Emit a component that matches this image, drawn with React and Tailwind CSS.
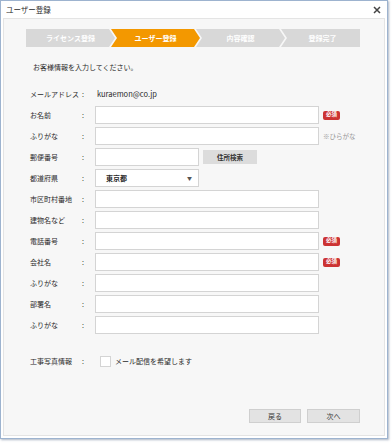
import React from 'react';

const FONT = "font-['Noto_Sans_CJK_JP','Noto_Sans',sans-serif]";

const STEPS = [
  { label: 'ライセンス登録', first: true },
  { label: 'ユーザー登録', active: true },
  { label: '内容確認' },
  { label: '登録完了', last: true },
];

const ROWS = [
  { label: 'お名前', required: true },
  { label: 'ふりがな', note: '※ひらがな' },
  { label: '郵便番号', kind: 'zip' },
  { label: '都道府県', kind: 'select' },
  { label: '市区町村番地' },
  { label: '建物名など' },
  { label: '電話番号', required: true },
  { label: '会社名', required: true },
  { label: 'ふりがな' },
  { label: '部署名' },
  { label: 'ふりがな' },
];

function Steps() {
  return (
    <div className="ml-[22px] mt-[10px] flex h-[18px] w-[334px]">
      {STEPS.map((s) => {
        const shape = s.first
          ? '[clip-path:polygon(0_0,calc(100%_-_6px)_0,100%_50%,calc(100%_-_6px)_100%,0_100%)]'
          : s.last
          ? '[clip-path:polygon(0_0,100%_0,100%_100%,0_100%,6px_50%)]'
          : '[clip-path:polygon(0_0,calc(100%_-_6px)_0,100%_50%,calc(100%_-_6px)_100%,0_100%,6px_50%)]';
        return (
          <div
            key={s.label}
            className={`flex h-full shrink-0 items-center justify-center text-[7px] font-bold text-white ${shape} ${
              s.first ? 'w-[89px]' : s.last ? '-ml-[4px] w-[79px] pl-[4px]' : '-ml-[4px] w-[89px]'
            } ${s.active ? 'bg-[#f39800]' : 'bg-[#d8d8d8]'}`}
          >
            {s.label}
          </div>
        );
      })}
    </div>
  );
}

function Badge() {
  return (
    <span className="ml-[4px] flex h-[9px] w-[17px] items-center justify-center rounded-[2px] bg-[#cc3333] text-[5.5px] font-bold leading-none text-white">
      必須
    </span>
  );
}

function Row({ label, children }) {
  return (
    <div className="flex h-[18px] items-center">
      <span className="w-[52px] shrink-0 whitespace-nowrap">{label}</span>
      <span className="w-[13px] shrink-0">:</span>
      {children}
    </div>
  );
}

function Field({ row }) {
  if (row.kind === 'zip') {
    return (
      <>
        <div className="h-[18px] w-[104px] border border-[#d4d4d4] bg-white" />
        <button className="ml-[4px] h-[14px] w-[54px] bg-[#dcdcdc] text-[6.5px] font-bold text-[#333]">住所検索</button>
      </>
    );
  }
  if (row.kind === 'select') {
    return (
      <div className="flex h-[18px] w-[104px] items-center justify-between border border-[#d4d4d4] bg-white pl-[10px] pr-[6px]">
        <span className="font-bold">東京都</span>
        <span className="text-[5px] text-[#555]">▼</span>
      </div>
    );
  }
  return (
    <>
      <div className="h-[18px] w-[224px] border border-[#d4d4d4] bg-white" />
      {row.required && <Badge />}
      {row.note && <span className="ml-[4px] text-[6.5px] text-[#999]">{row.note}</span>}
    </>
  );
}

export default function App() {
  return (
    <div className={`h-[446px] w-[392px] bg-white ${FONT} text-[7px] leading-[10px] text-[#2a2a2a]`}>
      <div className="flex h-[439px] w-[388px] flex-col border border-[#9db3cf] bg-white shadow-[1px_1px_2px_rgba(90,110,140,0.5)]">
        <div className="flex h-[17px] shrink-0 items-center justify-between pl-[5px] pr-[6px]">
          <span className="text-[7.5px]">ユーザー登録</span>
          <svg width="8" height="8" viewBox="0 0 8 8" className="text-[#444]">
            <path d="M1 1L7 7M7 1L1 7" stroke="currentColor" strokeWidth="1.5" />
          </svg>
        </div>
        <div className="mx-[2px] mb-[2px] flex flex-1 flex-col border border-[#e4e4e4] bg-[#f7f7f7]">
          <Steps />
          <p className="mt-[15px] pl-[29px]">お客様情報を入力してください。</p>
          <div className="mt-[13px] flex flex-col gap-[3px] pl-[26px]">
            <Row label="メールアドレス">
              <span className="pl-[2px] text-[7.5px]">kuraemon@co.jp</span>
            </Row>
            {ROWS.map((r, i) => (
              <Row key={i} label={r.label}>
                <Field row={r} />
              </Row>
            ))}
          </div>
          <div className="mt-[18px] pl-[26px]">
            <Row label="工事写真情報">
              <span className="ml-[5px] h-[11px] w-[11px] border border-[#d4d4d4] bg-white" />
              <span className="ml-[4px]">メール配信を希望します</span>
            </Row>
          </div>
          <div className="mt-[39px] flex justify-end gap-[6px] pr-[24px]">
            <button className="h-[14px] w-[52px] border border-[#cfcfcf] bg-[#e3e3e3] text-[7px] text-[#333]">戻る</button>
            <button className="h-[14px] w-[53px] border border-[#cfcfcf] bg-[#e3e3e3] text-[7px] text-[#333]">次へ</button>
          </div>
        </div>
      </div>
    </div>
  );
}
